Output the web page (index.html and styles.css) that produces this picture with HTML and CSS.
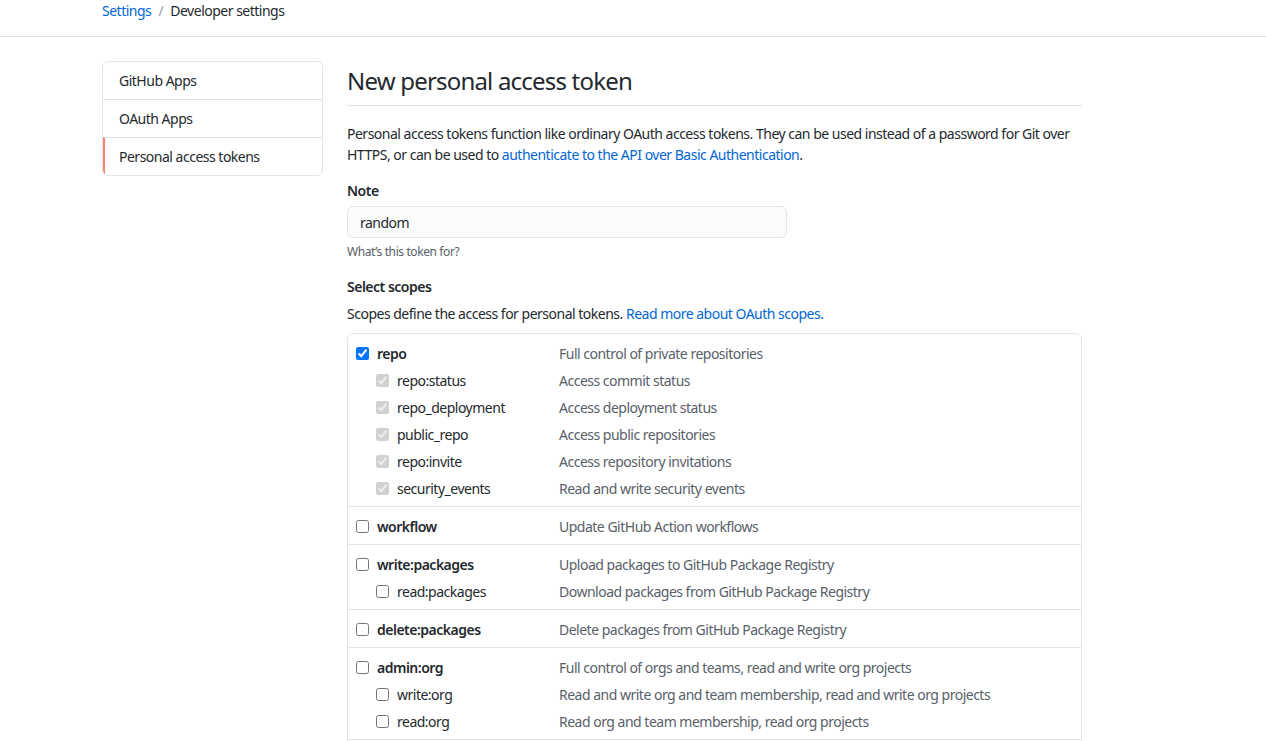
FILE: index.html
```html
<!DOCTYPE html>
<html lang="en">
<head>
  <meta charset="UTF-8">
  <title>New personal access token</title>
  <link rel="stylesheet" href="styles.css">
</head>
<body>
  <div class="page-head">
    <div class="container">
      <nav class="breadcrumb">
        <a href="#">Settings</a>
        <span class="sep">/</span>
        <span>Developer settings</span>
      </nav>
    </div>
  </div>

  <div class="container layout">
    <nav class="menu">
      <a class="menu-item" href="#">GitHub Apps</a>
      <a class="menu-item" href="#">OAuth Apps</a>
      <a class="menu-item selected" href="#">Personal access tokens</a>
    </nav>

    <main class="content">
      <div class="subhead">
        <h1>New personal access token</h1>
      </div>

      <p class="intro">
        Personal access tokens function like ordinary OAuth access tokens. They can be used instead of a password for Git over
        HTTPS, or can be used to <a href="#">authenticate to the API over Basic Authentication</a>.
      </p>

      <label class="field-label" for="note">Note</label>
      <input class="input" id="note" type="text" value="random">
      <p class="note">What’s this token for?</p>

      <h3 class="field-label scopes-title">Select scopes</h3>
      <p class="scopes-text">Scopes define the access for personal tokens. <a href="#">Read more about OAuth scopes.</a></p>

      <div class="scopes">
        <div class="scope-group">
          <div class="scope-row">
            <label class="scope-name top"><input type="checkbox" checked> repo</label>
            <span class="scope-desc">Full control of private repositories</span>
          </div>
          <div class="scope-row">
            <label class="scope-name sub"><input type="checkbox" checked disabled> repo:status</label>
            <span class="scope-desc">Access commit status</span>
          </div>
          <div class="scope-row">
            <label class="scope-name sub"><input type="checkbox" checked disabled> repo_deployment</label>
            <span class="scope-desc">Access deployment status</span>
          </div>
          <div class="scope-row">
            <label class="scope-name sub"><input type="checkbox" checked disabled> public_repo</label>
            <span class="scope-desc">Access public repositories</span>
          </div>
          <div class="scope-row">
            <label class="scope-name sub"><input type="checkbox" checked disabled> repo:invite</label>
            <span class="scope-desc">Access repository invitations</span>
          </div>
          <div class="scope-row">
            <label class="scope-name sub"><input type="checkbox" checked disabled> security_events</label>
            <span class="scope-desc">Read and write security events</span>
          </div>
        </div>

        <div class="scope-group">
          <div class="scope-row">
            <label class="scope-name top"><input type="checkbox"> workflow</label>
            <span class="scope-desc">Update GitHub Action workflows</span>
          </div>
        </div>

        <div class="scope-group">
          <div class="scope-row">
            <label class="scope-name top"><input type="checkbox"> write:packages</label>
            <span class="scope-desc">Upload packages to GitHub Package Registry</span>
          </div>
          <div class="scope-row">
            <label class="scope-name sub"><input type="checkbox"> read:packages</label>
            <span class="scope-desc">Download packages from GitHub Package Registry</span>
          </div>
        </div>

        <div class="scope-group">
          <div class="scope-row">
            <label class="scope-name top"><input type="checkbox"> delete:packages</label>
            <span class="scope-desc">Delete packages from GitHub Package Registry</span>
          </div>
        </div>

        <div class="scope-group">
          <div class="scope-row">
            <label class="scope-name top"><input type="checkbox"> admin:org</label>
            <span class="scope-desc">Full control of orgs and teams, read and write org projects</span>
          </div>
          <div class="scope-row">
            <label class="scope-name sub"><input type="checkbox"> write:org</label>
            <span class="scope-desc">Read and write org and team membership, read and write org projects</span>
          </div>
          <div class="scope-row">
            <label class="scope-name sub"><input type="checkbox"> read:org</label>
            <span class="scope-desc">Read org and team membership, read org projects</span>
          </div>
        </div>

        <div class="scope-group">
          <div class="scope-row">
            <label class="scope-name top"><input type="checkbox"> admin:public_key</label>
            <span class="scope-desc">Full control of user public keys</span>
          </div>
          <div class="scope-row">
            <label class="scope-name sub"><input type="checkbox"> write:public_key</label>
            <span class="scope-desc">Write user public keys</span>
          </div>
          <div class="scope-row">
            <label class="scope-name sub"><input type="checkbox"> read:public_key</label>
            <span class="scope-desc">Read user public keys</span>
          </div>
        </div>
      </div>
    </main>
  </div>
</body>
</html>
```
FILE: styles.css
```css
body {
  margin: 0;
  font-family: "Noto Sans", "Open Sans", sans-serif;
  font-size: 14px;
  line-height: 21px;
  letter-spacing: -0.5px;
  color: #24292e;
  background: #fff;
}

a {
  color: #0366d6;
  text-decoration: none;
}

.container {
  margin-left: 102px;
  width: 980px;
}

/* breadcrumb bar */
.page-head {
  height: 36px;
  border-bottom: 1px solid #e1e4e8;
}

.breadcrumb .sep {
  color: #959da5;
  margin: 0 4px;
}

.layout {
  display: flex;
  gap: 24px;
  margin-top: 24px;
}

/* left menu */
.menu {
  box-sizing: border-box;
  width: 221px;
  flex-shrink: 0;
  align-self: flex-start;
  border: 1px solid #e1e4e8;
  border-radius: 6px;
  overflow: hidden;
}

.menu-item {
  display: block;
  padding: 8px 16px;
  color: #24292e;
  border-top: 1px solid #e1e4e8;
}

.menu-item:first-child {
  border-top: none;
}

.menu-item.selected {
  padding-left: 14px;
  border-left: 2px solid #f9826c;
}

/* main column */
.content {
  width: 735px;
}

.subhead {
  padding: 2px 0 6px;
  border-bottom: 1px solid #e1e4e8;
}

.subhead h1 {
  margin: 0;
  font-size: 24px;
  line-height: 36px;
  font-weight: 400;
  letter-spacing: -0.8px;
}

.intro {
  margin: 17px 0 15px;
}

.field-label {
  display: block;
  margin: 0;
  font-size: 14px;
  font-weight: 600;
}

.input {
  display: block;
  box-sizing: border-box;
  width: 440px;
  height: 32px;
  margin-top: 5px;
  padding: 5px 12px;
  font: inherit;
  letter-spacing: inherit;
  color: #24292e;
  background: #fafbfc;
  border: 1px solid #e1e4e8;
  border-radius: 6px;
  outline: none;
}

.note {
  margin: 5px 0 0;
  font-size: 12px;
  line-height: 18px;
  letter-spacing: -0.4px;
  color: #586069;
}

.scopes-title {
  margin-top: 15px;
}

.scopes-text {
  margin: 6px 0 9px;
}

/* scopes table */
.scopes {
  border: 1px solid #e1e4e8;
  border-radius: 6px;
}

.scope-group {
  padding: 6px 0 4px;
  border-top: 1px solid #e1e4e8;
}

.scope-group:first-child {
  border-top: none;
}

.scope-row {
  display: flex;
  align-items: center;
  height: 27px;
  padding-left: 8px;
}

.scope-name {
  display: flex;
  align-items: center;
  gap: 8px;
  width: 203px;
  flex-shrink: 0;
}

.scope-name input {
  width: 13px;
  height: 13px;
  margin: 0;
}

.scope-name.top {
  font-weight: 600;
}

.scope-name.sub {
  padding-left: 20px;
  width: 183px;
}

.scope-desc {
  color: #586069;
}
```
